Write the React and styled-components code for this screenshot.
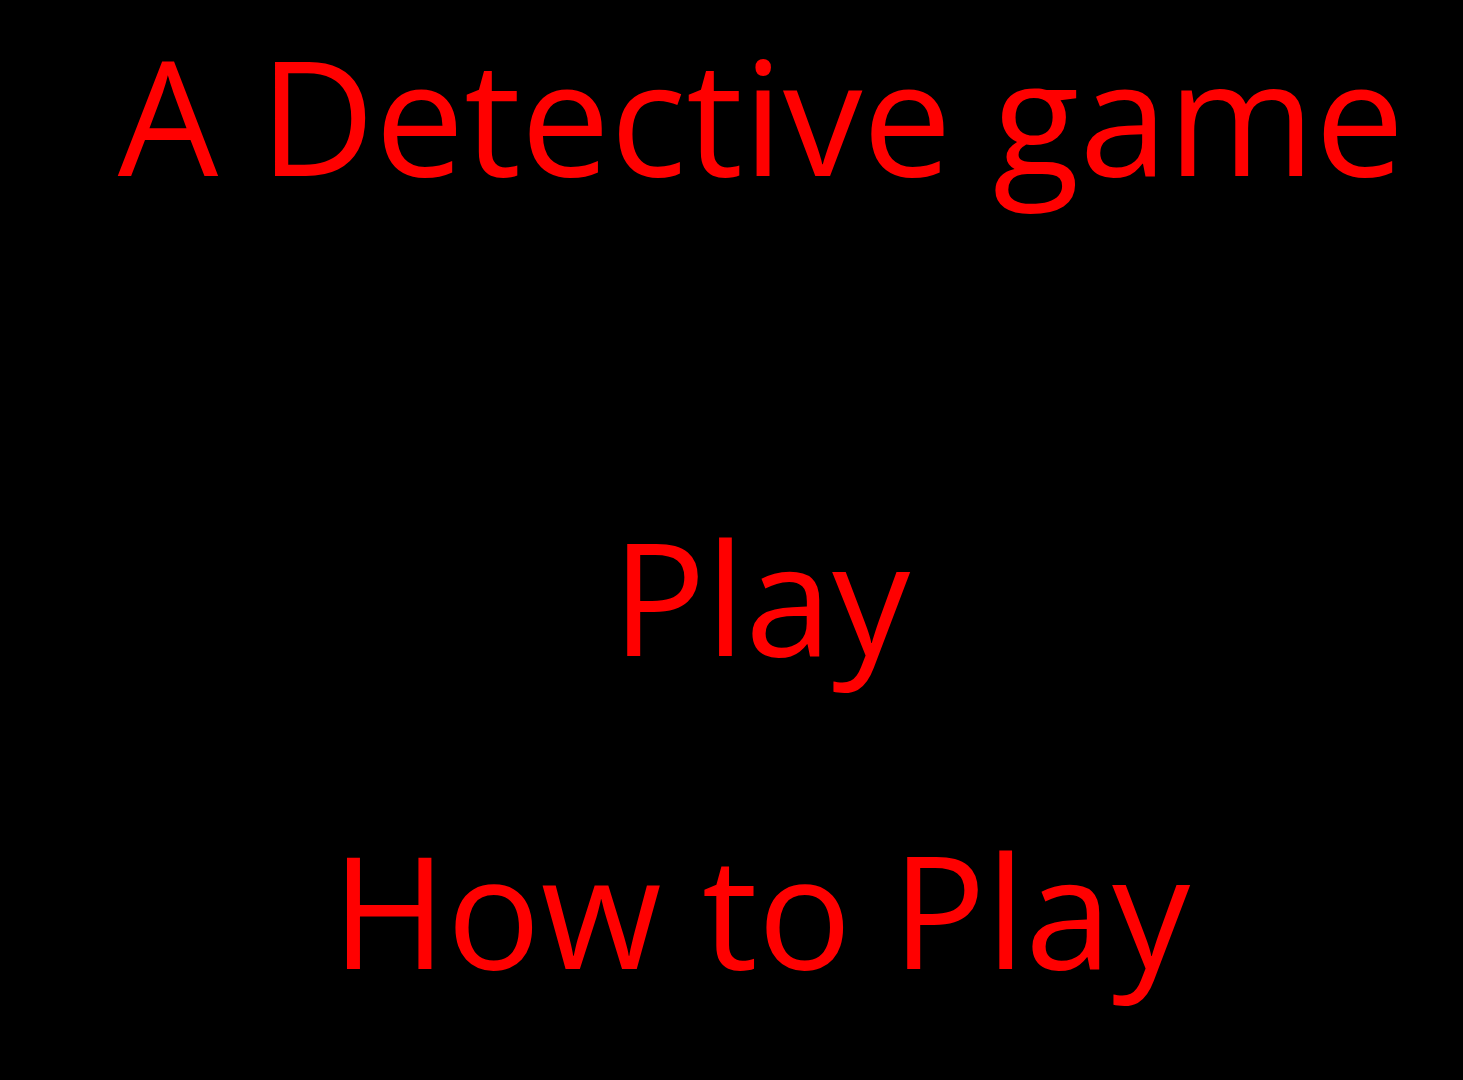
import React from 'react';
import styled, { createGlobalStyle } from 'styled-components';

// 검은 배경, 기본 폰트
const GlobalStyle = createGlobalStyle`
    html, body {
        background: #000;
    }
    body {
        margin: 8px;
        font-family: 'Open Sans', 'Noto Sans', sans-serif;
    }
`;

// 화면 전체, 가운데 정렬
const Screen = styled.div`
    display: flex;
    flex-direction: column;
    align-items: center;
    padding-left: 59px;
    color: #ff0000;
`;

// 제목
const Title = styled.h1`
    margin: -2px 0 0;
    font-size: 159px;
    font-weight: 400;
    line-height: normal;
    white-space: nowrap;
`;

// 메뉴 항목
const MenuItem = styled.div`
    margin-top: ${props => props.gap}px;
    font-size: 156px;
    line-height: normal;
    white-space: nowrap;
    cursor: pointer;
`;

const App = () => {
    return (
        <>
            <GlobalStyle/>
            <Screen>
                <Title>A Detective game</Title>
                <MenuItem gap={266}>Play</MenuItem>
                <MenuItem gap={100}>How to Play</MenuItem>
            </Screen>
        </>
    );
};

export default App;
